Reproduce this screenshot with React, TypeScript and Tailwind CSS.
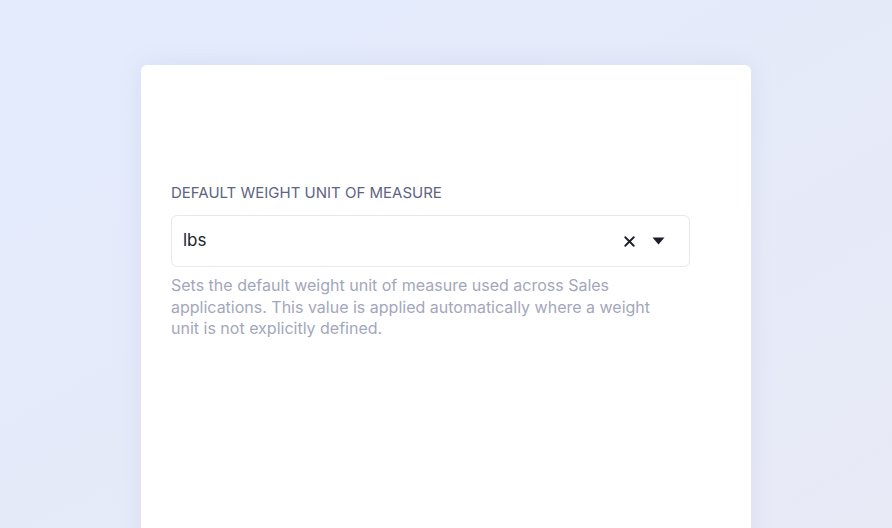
import { X } from 'lucide-react'

export default function App() {
  return (
    <div
      className="h-[528px] w-full overflow-hidden bg-gradient-to-br from-[#e3ebfd] to-[#e8eaf6] pt-[65px]"
      style={{ fontFamily: 'Inter, "Noto Sans", sans-serif' }}
    >
      <div className="ml-[141px] h-[500px] w-[610px] rounded-t-md bg-white px-[30px] pt-[118px] shadow-[0_0_24px_rgba(120,130,180,0.12)]">
        <div className="w-[519px]">
          <label className="block text-[15px] leading-[19px] text-[#5d6483]">
            DEFAULT WEIGHT UNIT OF MEASURE
          </label>
          {/* select box */}
          <div className="mt-[13px] flex h-[52px] items-center rounded-md border border-[#e6e8ee] bg-white pl-[11px] pr-[24px]">
            <span className="flex-1 text-[17px] text-[#1b1e2b]">lbs</span>
            <X className="h-[17px] w-[17px] text-[#1b1e2b]" strokeWidth={2.6} />
            <svg className="ml-[14px] h-[8px] w-[13px]" viewBox="0 0 13 8">
              <path d="M0.5 0.5 L12.5 0.5 L6.5 7.5 Z" fill="#1b1e2b" />
            </svg>
          </div>
          <p className="mt-[8px] w-[505px] text-[16px] leading-[21.5px] text-[#a3a7bb]">
            Sets the default weight unit of measure used across Sales applications. This value is
            applied automatically where a weight unit is not explicitly defined.
          </p>
        </div>
      </div>
    </div>
  )
}
